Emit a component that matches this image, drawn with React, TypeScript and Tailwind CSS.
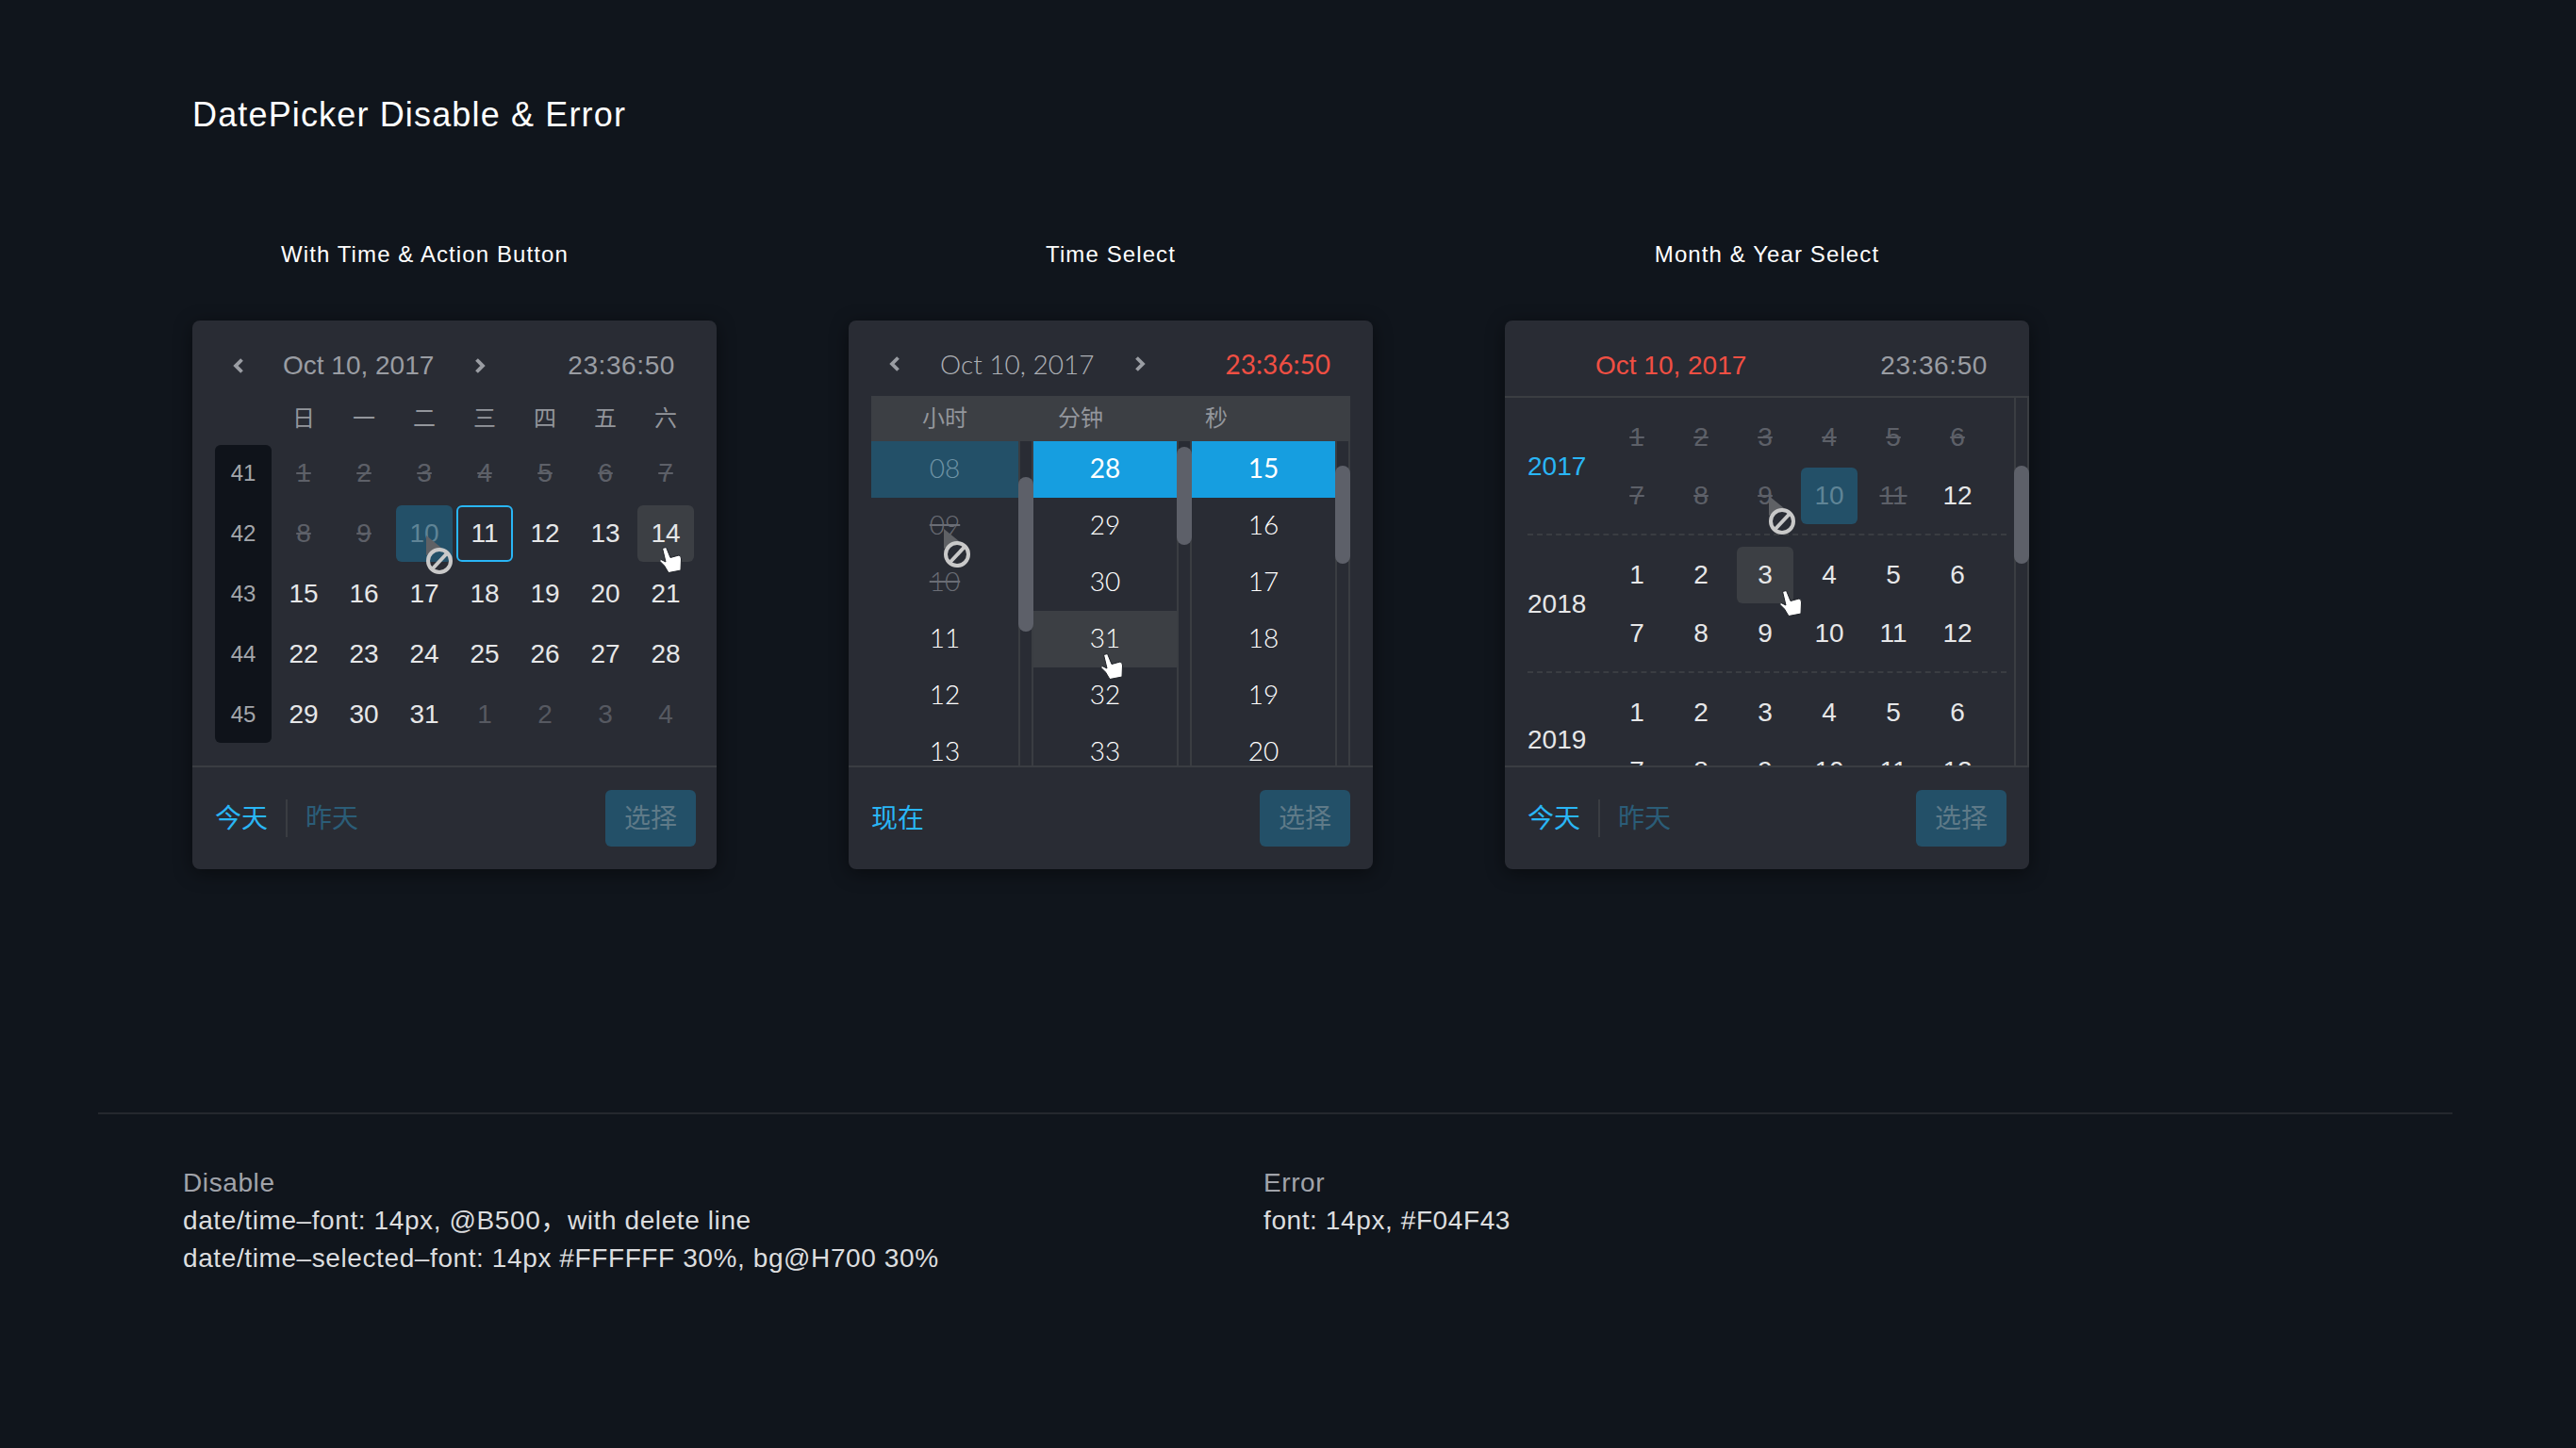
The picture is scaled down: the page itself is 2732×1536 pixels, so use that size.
import React from "react";

const DISABLED_CURSOR = (
  <svg width="32" height="44" viewBox="0 0 32 44" fill="none">
    <path d="M1 1V22L17 14Z" fill="#5f6165" />
    <circle cx="15" cy="28" r="12" stroke="#c9c9c9" strokeWidth="4" />
    <path d="M8 36L23 20" stroke="#c9c9c9" strokeWidth="4" />
  </svg>
);

const HAND_CURSOR = (
  <svg width="25" height="29" viewBox="0 0 25 29">
    <path
      d="M3.5 1.5L7.5.5L12 11.5L21 9Q23.5 9.5 23.5 13L23 25L10 27.5L5.5 20L.5 15L2 13.5L7 16Z"
      fill="#fff"
      stroke="#1f2228"
      strokeWidth="1"
      strokeLinejoin="round"
    />
  </svg>
);

function Chevron({ right = false }: { right?: boolean }) {
  return (
    <svg width="12" height="18" viewBox="0 0 12 18" fill="none" className="shrink-0">
      <path
        d={right ? "M2.5 2.5L9 9L2.5 15.5" : "M9.5 2.5L3 9L9.5 15.5"}
        stroke="#9a9da3"
        strokeWidth="3.8"
      />
    </svg>
  );
}

function Footer({ first, second, pr = "pr-6" }: { first: string; second?: string; pr?: string }) {
  return (
    <div className={`mt-auto h-[110px] shrink-0 border-t-2 border-[#3a3d42] flex items-center pl-6 ${pr}`}>
      <span className="pt-[2px] text-[28px] text-[#29b6f6]">{first}</span>
      {second && (
        <>
          <span className="ml-[19px] mr-[19px] w-[2px] h-10 bg-[#3a3d42]" />
          <span className="pt-[2px] text-[28px] text-[#2b5d78]">{second}</span>
        </>
      )}
      <button className="ml-auto w-24 h-[60px] pt-[2px] rounded-[6px] bg-[#235068] text-[28px] text-[#5f7a88]">
        选择
      </button>
    </div>
  );
}

function DayCell({ n, kind, children }: { n: number; kind?: string; children?: React.ReactNode }) {
  let cls = "text-[#e6e7e8]";
  if (kind === "strike") cls = "text-[#5d6068] line-through";
  if (kind === "muted") cls = "text-[#565961]";
  if (kind === "selected") cls = "bg-[#235068] text-[#5f8496] rounded-[6px]";
  if (kind === "focus") cls = "border-2 border-[#29b6f6] text-[#e6e7e8] rounded-[6px]";
  if (kind === "hover") cls = "bg-[#3c3f44] text-[#e6e7e8] rounded-[6px]";
  return (
    <div className={`relative h-[60px] flex items-center justify-center text-[28px] ${cls}`}>
      {n}
      {children}
    </div>
  );
}

function CalendarPanel() {
  const rows: [number, string?][] = [
    [1, "strike"], [2, "strike"], [3, "strike"], [4, "strike"], [5, "strike"], [6, "strike"], [7, "strike"],
    [8, "strike"], [9, "strike"], [10, "selected"], [11, "focus"], [12], [13], [14, "hover"],
    [15], [16], [17], [18], [19], [20], [21],
    [22], [23], [24], [25], [26], [27], [28],
    [29], [30], [31], [1, "muted"], [2, "muted"], [3, "muted"], [4, "muted"],
  ];
  return (
    <div className="w-[556px] h-[582px] rounded-[8px] bg-[#292c34] shadow-[0_4px_20px_rgba(0,0,0,0.45)] flex flex-col overflow-hidden">
      <div className="h-20 shrink-0 pt-[15px] pl-[43px] pr-[44px] flex items-center text-[28px] text-[#9a9da3]">
        <Chevron />
        <span className="ml-[41px] w-[161px] whitespace-nowrap">Oct 10, 2017</span>
        <span className="ml-[42px]">
          <Chevron right />
        </span>
        <span className="ml-auto tracking-[0.6px]">23:36:50</span>
      </div>
      <div className="pl-6 grid grid-cols-[repeat(8,60px)] gap-x-1 h-12 items-center text-[24px] text-[#93969c] text-center">
        <span />
        {["日", "一", "二", "三", "四", "五", "六"].map((d) => (
          <span key={d}>{d}</span>
        ))}
      </div>
      <div className="mt-1 pl-6 flex gap-1">
        <div className="w-[60px] bg-[#0f131a] rounded-[6px] flex flex-col gap-1">
          {[41, 42, 43, 44, 45].map((w) => (
            <div key={w} className="h-[60px] flex items-center justify-center text-[24px] text-[#a3a6ab]">
              {w}
            </div>
          ))}
        </div>
        <div className="grid grid-cols-[repeat(7,60px)] gap-1">
          {rows.map(([n, kind], i) => (
            <DayCell key={i} n={n} kind={kind}>
              {i === 9 && <div className="absolute left-[31px] top-[31px]">{DISABLED_CURSOR}</div>}
              {i === 13 && <div className="absolute left-[23px] top-[44px]">{HAND_CURSOR}</div>}
            </DayCell>
          ))}
        </div>
      </div>
      <Footer first="今天" second="昨天" pr="pr-[22px]" />
    </div>
  );
}

function TimeTrack({ top, height }: { top: string; height: string }) {
  return (
    <div className="relative w-4 shrink-0 border-x-2 border-[#3a3d42]">
      <div className={`absolute -left-[2px] w-4 rounded-full bg-[#5d6069] ${top} ${height}`} />
    </div>
  );
}

function TimeColumn({ items, width }: { items: { v: string; kind?: string }[]; width: string }) {
  return (
    <div className={`shrink-0 ${width}`}>
      {items.map((it) => {
        let cls = "text-white";
        if (it.kind === "active") cls = "bg-[#169ee0] text-white font-normal";
        if (it.kind === "selected") cls = "bg-[#235068] text-[#6f94a6]";
        if (it.kind === "strike") cls = "text-[#6a6d75] line-through";
        if (it.kind === "hover") cls = "bg-[#3c3f44] text-white";
        return (
          <div key={it.v} className={`relative h-[60px] pb-[5px] flex items-center justify-center ${cls}`}>
            {it.v}
            {it.v === "09" && <div className="absolute left-[76px] top-[32px] z-10">{DISABLED_CURSOR}</div>}
            {it.v === "31" && <div className="absolute left-[71px] top-[45px] z-10">{HAND_CURSOR}</div>}
          </div>
        );
      })}
    </div>
  );
}

function TimePanel() {
  return (
    <div className="w-[556px] h-[582px] rounded-[8px] bg-[#292c34] shadow-[0_4px_20px_rgba(0,0,0,0.45)] flex flex-col overflow-hidden">
      <div className="h-20 shrink-0 pt-3 pl-[43px] pr-[45px] flex items-center text-[28px] font-light text-[#aeb1b6] font-['Lato','Noto_Sans_CJK_SC',sans-serif]">
        <Chevron />
        <span className="ml-[42px] w-[164px] whitespace-nowrap">Oct 10, 2017</span>
        <span className="ml-[42px]">
          <Chevron right />
        </span>
        <span className="ml-auto font-normal text-[#f04f43]">23:36:50</span>
      </div>
      <div className="mx-6 h-12 shrink-0 bg-[#3c3f44] flex items-center text-[24px] text-[#93969c]">
        <span className="ml-[54px]">小时</span>
        <span className="ml-[96px]">分钟</span>
        <span className="ml-[108px]">秒</span>
      </div>
      <div className="mx-6 h-[344px] shrink-0 flex overflow-hidden text-[28px] font-light font-['Lato','Noto_Sans_CJK_SC',sans-serif]">
        <TimeColumn
          width="w-[156px]"
          items={[
            { v: "08", kind: "selected" },
            { v: "09", kind: "strike" },
            { v: "10", kind: "strike" },
            { v: "11" },
            { v: "12" },
            { v: "13" },
          ]}
        />
        <TimeTrack top="top-[38px]" height="h-[164px]" />
        <TimeColumn
          width="w-[152px]"
          items={[
            { v: "28", kind: "active" },
            { v: "29" },
            { v: "30" },
            { v: "31", kind: "hover" },
            { v: "32" },
            { v: "33" },
          ]}
        />
        <TimeTrack top="top-[6px]" height="h-[104px]" />
        <TimeColumn
          width="w-[152px]"
          items={[
            { v: "15", kind: "active" },
            { v: "16" },
            { v: "17" },
            { v: "18" },
            { v: "19" },
            { v: "20" },
          ]}
        />
        <TimeTrack top="top-[26px]" height="h-[104px]" />
      </div>
      <Footer first="现在" />
    </div>
  );
}

function MonthGroup({
  year,
  yearClass = "text-[#e6e7e8]",
  kinds = {},
  cursor,
  last = false,
}: {
  year: number;
  yearClass?: string;
  kinds?: Record<number, string>;
  cursor?: "disabled" | "hand";
  last?: boolean;
}) {
  return (
    <div className={`ml-6 mr-2 pt-3 pb-[10px] flex shrink-0 ${last ? "" : "border-b-2 border-dashed border-[#3a3d42]"}`}>
      <div className={`w-[86px] flex items-center text-[28px] ${last ? "pb-1" : ""}`}>
        <span className={yearClass}>{year}</span>
      </div>
      <div className="grid grid-cols-[repeat(6,60px)] gap-x-2 gap-y-[2px]">
        {[1, 2, 3, 4, 5, 6, 7, 8, 9, 10, 11, 12].map((m) => (
          <DayCell key={m} n={m} kind={kinds[m]}>
            {cursor === "disabled" && m === 9 && (
              <div className="absolute left-[33px] top-[29px] z-10">{DISABLED_CURSOR}</div>
            )}
            {cursor === "hand" && m === 3 && (
              <div className="absolute left-[45px] top-[46px] z-10">{HAND_CURSOR}</div>
            )}
          </DayCell>
        ))}
      </div>
    </div>
  );
}

function MonthPanel() {
  return (
    <div className="w-[556px] h-[582px] rounded-[8px] bg-[#292c34] shadow-[0_4px_20px_rgba(0,0,0,0.45)] flex flex-col overflow-hidden">
      <div className="h-[82px] shrink-0 pt-[15px] pl-[96px] pr-[44px] flex items-center border-b-2 border-[#3a3d42] text-[28px] text-[#9a9da3]">
        <span className="text-[#f04f43]">Oct 10, 2017</span>
        <span className="ml-auto tracking-[0.6px]">23:36:50</span>
      </div>
      <div className="h-[390px] shrink-0 flex overflow-hidden">
        <div className="w-[540px] shrink-0 flex flex-col overflow-hidden">
          <MonthGroup
            year={2017}
            yearClass="text-[#29b6f6]"
            kinds={{ 1: "strike", 2: "strike", 3: "strike", 4: "strike", 5: "strike", 6: "strike", 7: "strike", 8: "strike", 9: "strike", 10: "selected", 11: "strike" }}
            cursor="disabled"
          />
          <MonthGroup year={2018} kinds={{ 3: "hover" }} cursor="hand" />
          <MonthGroup year={2019} last />
        </div>
        <div className="relative w-4 shrink-0 border-x-2 border-[#3a3d42]">
          <div className="absolute -left-[2px] top-[72px] w-4 h-[104px] rounded-full bg-[#5d6069]" />
        </div>
      </div>
      <Footer first="今天" second="昨天" />
    </div>
  );
}

export default function App() {
  return (
    <div className="w-[2732px] h-[1536px] overflow-hidden bg-[#10151c] pt-[100px] font-['Liberation_Sans','Noto_Sans_CJK_SC',sans-serif]">
      <h1 className="pl-[204px] h-11 leading-[44px] text-[36px] tracking-[1.15px] text-white">DatePicker Disable &amp; Error</h1>

      <div className="mt-[110px] pl-[204px] flex gap-[140px] h-8 items-center text-[24px] tracking-[1.1px] text-white">
        <div className="w-[556px] pl-[94px]">With Time &amp; Action Button</div>
        <div className="w-[556px] text-center">Time Select</div>
        <div className="w-[556px] text-center">Month &amp; Year Select</div>
      </div>

      <div className="mt-[54px] pl-[204px] flex gap-[140px]">
        <CalendarPanel />
        <TimePanel />
        <MonthPanel />
      </div>

      <div className="mt-[258px] ml-[104px] w-[2497px] h-[2px] bg-[#25282e]" />

      <div className="mt-[53px] pl-[194px] flex text-[28px] leading-10 tracking-[0.6px] text-[#dcdddf]">
        <div className="w-[1146px]">
          <p className="text-[#a0a3aa]">Disable</p>
          <p>date/time–font: 14px, @B500，with delete line</p>
          <p>date/time–selected–font: 14px #FFFFFF 30%, bg@H700 30%</p>
        </div>
        <div>
          <p className="text-[#a0a3aa]">Error</p>
          <p>font: 14px, #F04F43</p>
        </div>
      </div>
    </div>
  );
}
